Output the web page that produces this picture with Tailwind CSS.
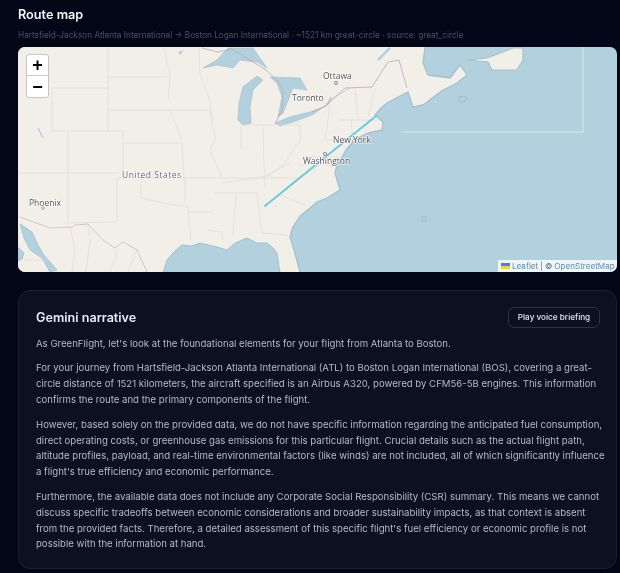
<!DOCTYPE html>
<html lang="en">
<head>
  <meta charset="UTF-8" />
  <meta name="viewport" content="width=device-width, initial-scale=1.0"/>
  <title>Route map</title>
  <script src="https://cdn.jsdelivr.net/npm/@tailwindcss/browser@4"></script>
</head>
<body class="bg-[#020617] font-['Inter',sans-serif] overflow-hidden">
  <main class="w-[620px] h-[573px] pl-[18px] pr-[3px] pt-[6px] blur-[0.3px]">
    <h2 class="text-[12.7px] leading-[17px] font-semibold text-[#f1f5f9]">Route map</h2>
    <p class="mt-[5px] text-[8.25px] leading-[14px] text-[#4a5267] whitespace-nowrap">Hartsfield-Jackson Atlanta International → Boston Logan International · ~1521 km great-circle · source: great_circle</p>

    <section class="relative mt-[5px] w-[599px] h-[225px] rounded-[7px] overflow-hidden bg-[#b2d0dd]">
      <svg class="block" width="599" height="225" viewBox="18 47 599 225" fill="none" stroke-linejoin="round">
        <!-- land -->
        <path fill="#f2efe9" d="M0 40H425L423 63L428 75L450 78L460 65L467 75L457 83L443 90L423 105L413 107L408 92L398 97L387 103L381 108L375 115L383 122L382 130L368 133L353 140L352 143L346 150L342 157L337 165L335 173L340 190L327 198L317 202L310 208L300 216L293 227L290 237L294 250L300 272H0Z"/>
        <!-- coast outline -->
        <path stroke="#a3c1cf" stroke-width="1.3" d="M425 48L423 63L428 75L450 78L460 65L467 75L457 83L443 90L423 105L413 107L408 92L398 97L387 103L381 108L375 115L383 122L382 130L368 133L353 140L352 143L346 150L342 157L337 165L335 173L340 190L327 198L317 202L310 208L300 216L293 227L290 237L294 250L300 272"/>
        <path stroke="#a3c1cf" stroke-width="1.2" fill="#f2efe9" d="M467 60L487 58L513 48L523 48L523 60L517 70L492 70L488 62Z"/>
        <!-- great lakes -->
        <g fill="#b2d0dd" stroke="#a3c1cf" stroke-width=".7">
          <path d="M203 68L217 60L228 48H253L267 68L257 62L240 60L233 68L217 65Z"/>
          <path d="M238 120L239 103L243 87L257 76L263 80L253 90L250 107L251 123L243 125Z"/>
          <path d="M270 77L300 78L307 90L293 88L287 103L283 113L278 117L282 97L277 83Z"/>
          <path d="M275 123L290 117L310 112L326 106L331 97L329 103L312 115L293 122L280 126Z"/>
        </g>
        <!-- st lawrence -->
        <path stroke="#b2d0dd" stroke-width="2.5" d="M390 48L378 60"/>
        <path stroke="#a3c1cf" stroke-width=".6" d="M326 104L336 96L350 88"/>
        <!-- small islands and lakes -->
        <path stroke="#9dbccb" stroke-width="1" fill="#b2d0dd" d="M459 97Q464 95 467 98Q465 103 461 102Q458 101 459 97Z"/>
        <circle cx="424" cy="219" r="2.5" stroke="#9dbccb" stroke-width="1"/>
        <path fill="#b2d0dd" d="M178 52L184 50L180 55Z"/>
        <path stroke="#b2d0dd" stroke-width="1.5" d="M38 128L43 138"/>
        <!-- gulf of mexico and pacific -->
        <path fill="#b2d0dd" stroke="#a3c1cf" stroke-width="1" d="M163 273L167 260L174 252L182 245L192 246L200 243L217 247L227 250L235 243L247 238L257 243L267 243L273 248L277 253L280 273Z"/>
        <path fill="#b2d0dd" stroke="#a3c1cf" stroke-width=".8" d="M20 224L32 232L38 245L44 255L57 270L50 272L42 258L30 250L24 238Z"/>
        <path fill="#b2d0dd" stroke="#a3c1cf" stroke-width=".8" d="M18 247L24 253L22 259L18 261Z"/>
        <!-- state lines -->
        <g stroke="#e0dbd5" stroke-width=".7">
          <path d="M108 48V131M108 77H167M52 88H108M52 88V131H68M108 110H170M68 131H123M123 131V178M117 178H222M68 131V223M117 178V222M68 223L117 222M18 173H117M124 143H180"/>
          <path d="M141 178V198L163 203L188 207M185 178V203M188 212H213M188 207L191 240M213 193H257M236 193L233 235M257 193L262 233L287 235M208 230L222 232L223 241"/>
          <path d="M164 48L170 75L168 100M170 110L178 130L182 143L184 178M199 48L200 75L210 100L212 122M170 110H210L212 122L216 140L210 150L222 178M241 125V150M263 125L264 165L265 187"/>
          <path d="M243 125H300M300 125L300 140L283 165L268 176L222 183M222 178H300L320 165M262 178L290 163M300 165L338 165M280 195L305 205M303 157L340 157M340 120H378M330 105L325 140H352M355 90L358 120M375 88L368 117M351 120L353 140"/>
          <path d="M88 224L90 240L86 272M110 272L118 250M137 250L128 272M70 227L75 250L72 272M24 260H50"/>
        </g>
        <!-- national border -->
        <path stroke="#cfc5c8" stroke-width="1" d="M20 217L50 228L73 227L75 225L88 224L103 240L115 248L123 242L137 250L147 272"/>
        <path stroke="#b9a9b6" stroke-width=".8" d="M202 48L218 52L232 49L266 70L277 80L283 90L282 110L278 118L275 124M312 112L326 106L345 88L372 87L388 62L399 60L407 88"/>
        <!-- maritime boundary -->
        <path stroke="#d6e7ee" stroke-width="1" d="M402 132H583V47"/>
        <!-- route -->
        <path stroke="#69cbe0" stroke-width="2" stroke-linecap="round" d="M265 206L376 116"/>
        <circle cx="325" cy="154" r="1.6" stroke="#6b7785" stroke-width=".8"/>
        <circle cx="336" cy="83" r="1.6" stroke="#6b7785" stroke-width=".8"/>
        <circle cx="43" cy="208" r="1.4" stroke="#8a8a8a" stroke-width=".7"/>
        <!-- labels -->
        <g font-family="Open Sans, sans-serif" font-size="8.5" stroke="#ffffff" stroke-width="1.6" paint-order="stroke" stroke-opacity=".7">
          <text x="323" y="79" fill="#555">Ottawa</text>
          <text x="292" y="101" fill="#555">Toronto</text>
          <text x="333" y="143" fill="#555">New York</text>
          <text x="303" y="164" fill="#555">Washington</text>
          <text x="29" y="206" fill="#555">Phoenix</text>
          <text x="122" y="178" fill="#6f6578" letter-spacing=".5">United States</text>
        </g>
      </svg>

      <!-- leaflet controls -->
      <div class="absolute left-[8px] top-[7px] w-[23px] rounded-[3px] border border-[#c5c5c5] bg-white flex flex-col">
        <span class="h-[21px] flex items-center justify-center border-b border-[#ccc] text-[18px] font-bold leading-none text-black font-['Liberation_Sans',sans-serif]">+</span>
        <span class="h-[21px] flex items-center justify-center text-[18px] font-bold leading-none text-black font-['Liberation_Sans',sans-serif]">−</span>
      </div>
      <div class="absolute right-0 bottom-0 h-[12px] w-[119px] pl-[3px] bg-white/80 flex items-center gap-[2px] text-[8.1px] leading-none text-[#5d6c7c] whitespace-nowrap">
        <svg width="9" height="6" viewBox="0 0 9 6"><rect width="9" height="3" fill="#4C7BE1"/><rect y="3" width="9" height="3" fill="#FFD500"/></svg>
        <span class="text-[#5b8cb4]">Leaflet</span><span>|</span><span>©</span><span class="text-[#5b8cb4]">OpenStreetMap</span>
      </div>
    </section>

    <section class="mt-[18px] w-[599px] h-[279px] rounded-[12px] border border-[#1a2132] bg-[#0b1120] pl-[17px] pr-[16px] pt-[16px]">
      <div class="flex items-start justify-between">
        <h3 class="mt-[1px] text-[12.6px] leading-[20px] font-semibold text-[#e8ecf2]">Gemini narrative</h3>
        <button class="h-[21px] w-[92px] rounded-[6px] border border-[#2c3447] text-[8.2px] font-medium text-[#e2e6ec]">Play voice briefing</button>
      </div>
      <div class="mt-[8px] space-y-[8.5px] text-[9.6px] leading-[15.9px] text-[#b4bac7] whitespace-nowrap">
        <p>As GreenFlight, let's look at the foundational elements for your flight from Atlanta to Boston.</p>
        <p>For your journey from Hartsfield-Jackson Atlanta International (ATL) to Boston Logan International (BOS), covering a great-<br>circle distance of 1521 kilometers, the aircraft specified is an Airbus A320, powered by CFM56-5B engines. This information<br>confirms the route and the primary components of the flight.</p>
        <p>However, based solely on the provided data, we do not have specific information regarding the anticipated fuel consumption,<br>direct operating costs, or greenhouse gas emissions for this particular flight. Crucial details such as the actual flight path,<br>altitude profiles, payload, and real-time environmental factors (like winds) are not included, all of which significantly influence<br>a flight's true efficiency and economic performance.</p>
        <p>Furthermore, the available data does not include any Corporate Social Responsibility (CSR) summary. This means we cannot<br>discuss specific tradeoffs between economic considerations and broader sustainability impacts, as that context is absent<br>from the provided facts. Therefore, a detailed assessment of this specific flight's fuel efficiency or economic profile is not<br>possible with the information at hand.</p>
      </div>
    </section>
  </main>
</body>
</html>
